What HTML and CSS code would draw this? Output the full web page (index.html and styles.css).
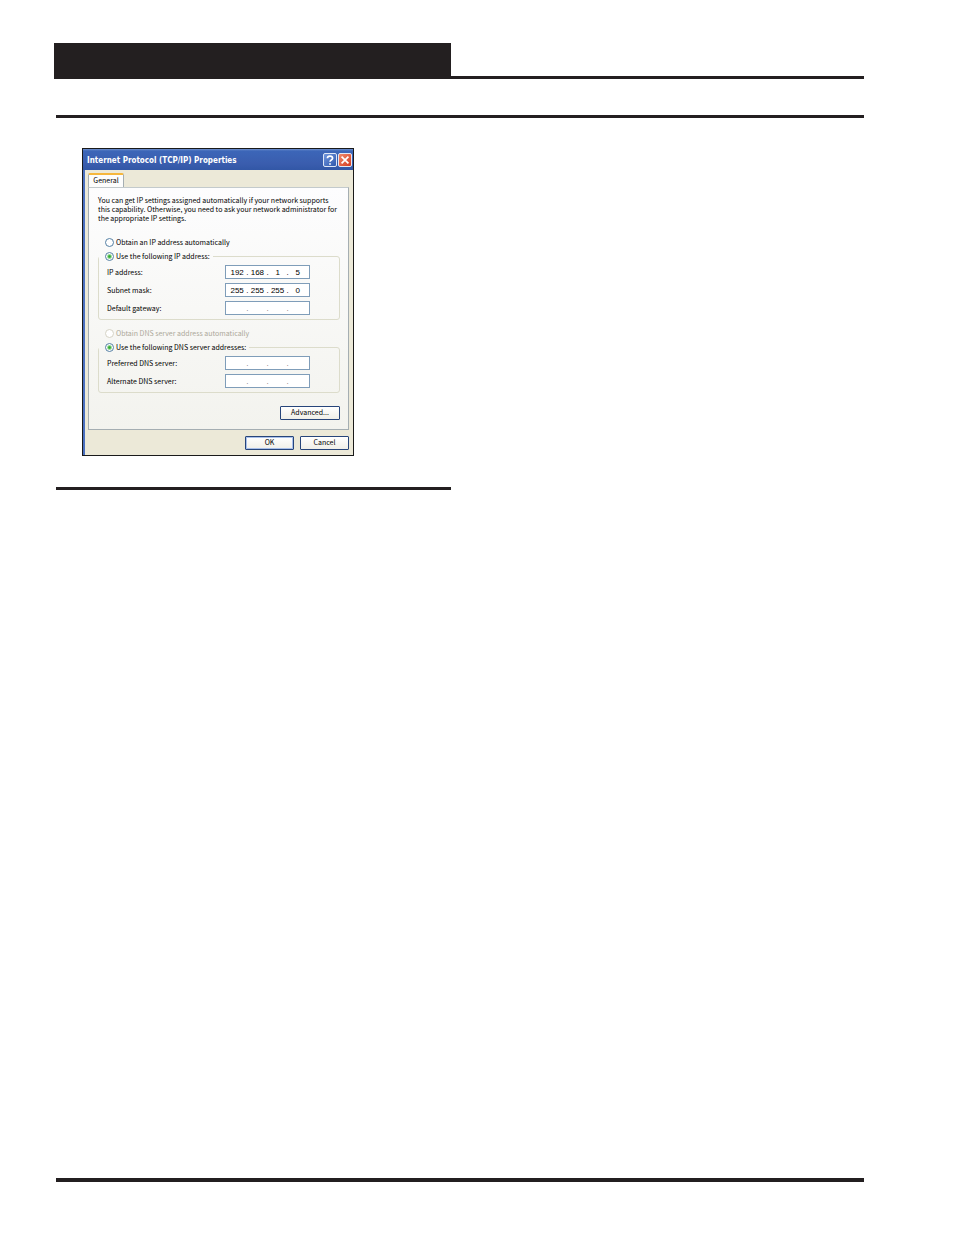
FILE: index.html
```html
<!DOCTYPE html>
<html lang="en">
<head>
    <meta charset="UTF-8">
    <meta name="viewport" content="width=device-width, initial-scale=1.0">
    <title>Internet Protocol (TCP/IP) Properties</title>
    <link rel="stylesheet" href="styles.css">
</head>
<body>
    <div class="page">
        <header class="page-header">
            <div class="header-tab"></div>
        </header>
        <hr class="rule">

        <main class="columns">
            <section class="column">
                <form class="dialog">
                    <div class="title-bar">
                        <h1>Internet Protocol (TCP/IP) Properties</h1>
                        <button type="button" class="title-button" aria-label="Help">
                            <svg viewBox="0 0 14 14"><path d="M4 5C4 1.8 10 1.8 10 5C10 7 7 6.8 7 9M7 10.8V12.6"/></svg>
                        </button>
                        <button type="button" class="title-button close" aria-label="Close">
                            <svg viewBox="0 0 14 14"><path d="M3 3L11 11M11 3L3 11"/></svg>
                        </button>
                    </div>

                    <div class="dialog-body">
                        <button type="button" class="tab">General</button>
                        <div class="panel">
                            <p class="intro">You can get IP settings assigned automatically if your network supports<br>this capability. Otherwise, you need to ask your network administrator for<br>the appropriate IP settings.</p>

                            <label class="option"><input type="radio" name="ip">Obtain an IP address automatically</label>
                            <fieldset class="group">
                                <legend><label class="option"><input type="radio" name="ip" checked>Use the following IP address:</label></legend>
                                <div class="row">
                                    <label for="ip1">IP address:</label>
                                    <div class="ip-field">
                                        <input id="ip1" value="192">.<input aria-label="IP address part 2" value="168">.<input aria-label="IP address part 3" value="1">.<input aria-label="IP address part 4" value="5">
                                    </div>
                                </div>
                                <div class="row">
                                    <label for="mask1">Subnet mask:</label>
                                    <div class="ip-field">
                                        <input id="mask1" value="255">.<input aria-label="Subnet mask part 2" value="255">.<input aria-label="Subnet mask part 3" value="255">.<input aria-label="Subnet mask part 4" value="0">
                                    </div>
                                </div>
                                <div class="row">
                                    <label for="gateway1">Default gateway:</label>
                                    <div class="ip-field empty">
                                        <input id="gateway1">.<input aria-label="Default gateway part 2">.<input aria-label="Default gateway part 3">.<input aria-label="Default gateway part 4">
                                    </div>
                                </div>
                            </fieldset>

                            <label class="option disabled"><input type="radio" name="dns" disabled>Obtain DNS server address automatically</label>
                            <fieldset class="group">
                                <legend><label class="option"><input type="radio" name="dns" checked>Use the following DNS server addresses:</label></legend>
                                <div class="row">
                                    <label for="preferred1">Preferred DNS server:</label>
                                    <div class="ip-field empty">
                                        <input id="preferred1">.<input aria-label="Preferred DNS part 2">.<input aria-label="Preferred DNS part 3">.<input aria-label="Preferred DNS part 4">
                                    </div>
                                </div>
                                <div class="row">
                                    <label for="alternate1">Alternate DNS server:</label>
                                    <div class="ip-field empty">
                                        <input id="alternate1">.<input aria-label="Alternate DNS part 2">.<input aria-label="Alternate DNS part 3">.<input aria-label="Alternate DNS part 4">
                                    </div>
                                </div>
                            </fieldset>

                            <div class="panel-actions">
                                <button type="button" class="button wide">Advanced...</button>
                            </div>
                        </div>

                        <div class="actions">
                            <button type="submit" class="button default">OK</button>
                            <button type="button" class="button">Cancel</button>
                        </div>
                    </div>
                </form>
                <hr class="rule">
            </section>
        </main>

        <hr class="rule footer-rule">
    </div>
</body>
</html>
```
FILE: styles.css
```css
* {
    box-sizing: border-box;
}

body {
    margin: 0;
    background: #fff;
    font-family: "Noto Sans CJK SC", "Liberation Sans", Arial, sans-serif;
    font-size: 7px;
    line-height: 9px;
    color: #000;
}

.page {
    display: flex;
    flex-direction: column;
    min-height: 100vh;
    padding: 43px 90px 53px 54px;
}

.page-header {
    border-bottom: 3px solid #231f20;
    margin-bottom: 36px;
}

.header-tab {
    width: 49%;
    height: 33px;
    background: #231f20;
}

.rule {
    height: 3px;
    margin: 0 0 0 2px;
    border: none;
    background: #231f20;
}

.footer-rule {
    height: 4px;
    margin-top: auto;
}

.columns {
    display: grid;
    grid-template-columns: 49% 51%;
    padding-top: 30px;
}

/* Dialog window */
.dialog {
    width: 272px;
    margin: 0 0 31px 28px;
    border: 1px solid #1a1a1a;
    background: #ece9d8;
}

.title-bar {
    display: flex;
    align-items: center;
    gap: 1px;
    height: 21px;
    padding: 1px 1px 0 4px;
    background: linear-gradient(#6f8fce 0, #3c66b8 2px, #3a5dae 70%, #3257a6);
    color: #fff;
}

.title-bar h1 {
    flex: 1;
    margin: 0;
    font-family: "DejaVu Sans Condensed", "DejaVu Sans", sans-serif;
    font-size: 8px;
    font-weight: 700;
}

.title-button {
    width: 14px;
    height: 14px;
    padding: 0;
    border: 1px solid #dfe7f6;
    border-radius: 2px;
    background: linear-gradient(135deg, #7095dc, #3059ad);
}

.title-button.close {
    background: linear-gradient(135deg, #f08a6c, #d63c20);
}

.title-button svg {
    display: block;
    width: 12px;
    height: 12px;
    fill: none;
    stroke: #fff;
    stroke-width: 2;
}

.dialog-body {
    padding: 3px 4px 5px 3px;
    border-left: 2px solid #4a70c0;
}

.tab {
    display: block;
    width: 36px;
    height: 14px;
    padding: 0 0 1px;
    border: 1px solid #a5aeb2;
    border-top: 2px solid #f6b73c;
    border-bottom: none;
    border-radius: 2px 2px 0 0;
    background: #fdfdfc;
    font: inherit;
    color: inherit;
}

.panel {
    padding: 8px 8px 9px 9px;
    border: 1px solid #a5aeb2;
    border-top-color: #c3cacc;
    background: linear-gradient(#fdfdfe, #f3f3ee);
}

.intro {
    margin: 0 0 14px;
    white-space: nowrap;
}

.option {
    display: flex;
    align-items: center;
    gap: 2px;
    height: 10px;
    padding-left: 7px;
    white-space: nowrap;
}

.option.disabled {
    margin-top: 8px;
    color: #aca899;
}

.option input {
    appearance: none;
    width: 9px;
    height: 9px;
    margin: 0;
    border: 1px solid #5580a5;
    border-radius: 50%;
    background: #fff;
}

.option input:checked {
    background: radial-gradient(circle, #2fa82f 0, #42b542 1px, #fff 3px);
}

.option input:disabled {
    border-color: #d5d3c5;
}

.group {
    margin: 4px 0 0;
    padding: 4px 0 4px 8px;
    border: 1px solid #dcdccb;
    border-radius: 3px;
}

.group legend {
    margin-left: -8px;
    padding: 0 3px 0 0;
}

.group .option {
    padding-left: 6px;
}

.row {
    display: grid;
    grid-template-columns: 118px 85px;
    align-items: center;
    margin-bottom: 4px;
}

.row:last-child {
    margin-bottom: 0;
}

.ip-field {
    display: flex;
    align-items: center;
    justify-content: center;
    height: 14px;
    border: 1px solid #7f9db9;
    background: #fff;
    font-family: "Liberation Sans", Arial, sans-serif;
    font-size: 8px;
}

.ip-field.empty {
    color: #777;
}

.ip-field input {
    width: 18px;
    height: 9px;
    padding: 0;
    border: none;
    background: none;
    font: inherit;
    color: #000;
    text-align: center;
}

.panel-actions {
    display: flex;
    justify-content: flex-end;
    margin-top: 13px;
}

.actions {
    display: flex;
    justify-content: flex-end;
    gap: 6px;
    margin-top: 6px;
}

.button {
    width: 49px;
    height: 14px;
    padding: 0 0 1px;
    border: 1px solid #27457a;
    border-radius: 1px;
    background: linear-gradient(#fff, #f0efe8);
    font: inherit;
    color: inherit;
}

.button.wide {
    width: 60px;
}

.button.default {
    box-shadow: inset 0 0 0 1px #a9c0ea;
}
```
